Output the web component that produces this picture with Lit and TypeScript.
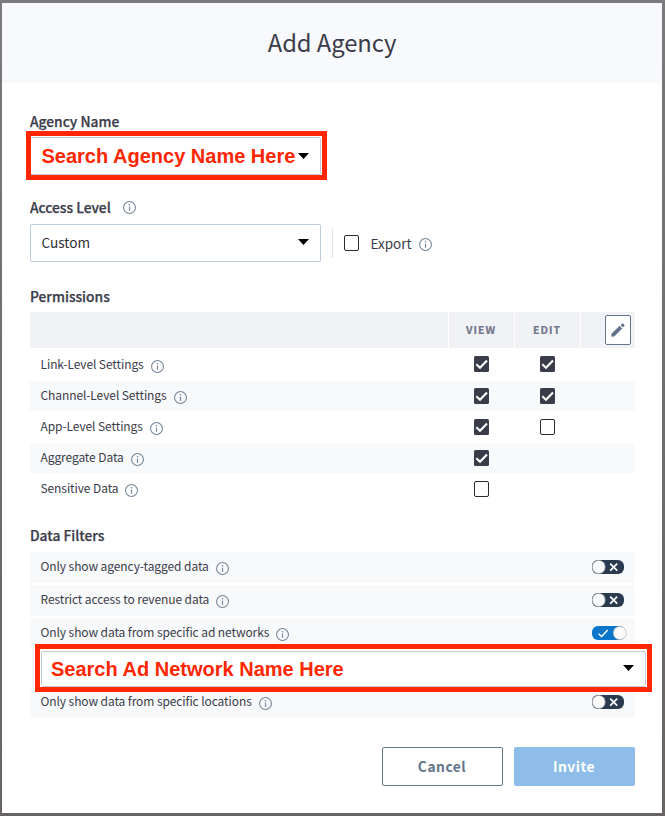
import { LitElement, html, css, svg, nothing } from "lit";
import { customElement, property } from "lit/decorators.js";

@customElement("info-icon")
class InfoIcon extends LitElement {
  static styles = css`
    :host { display: inline-flex; flex: none; width: 13px; height: 13px; }
    svg { display: block; }
  `;
  render() {
    return html`<svg width="13" height="13" viewBox="0 0 13 13" fill="none" stroke="#76869a">
      <circle cx="6.5" cy="6.5" r="5.95" stroke-width="1.1" />
      <path d="M6.5 5.6V9.8" stroke-width="1.2" />
      <circle cx="6.5" cy="3.8" r=".8" fill="#76869a" stroke="none" />
    </svg>`;
  }
}

@customElement("check-box")
class CheckBox extends LitElement {
  @property({ type: Boolean }) checked = false;
  static styles = css`
    :host { display: inline-flex; flex: none; width: 15px; height: 16px; }
    svg { display: block; }
  `;
  render() {
    return html`<svg width="15" height="16" viewBox="0 0 15 16" fill="none">
      ${this.checked
        ? svg`<rect width="15" height="16" rx="1.5" fill="#3b3c4a" />
            <path d="M2.3 8.2L6 11.8L13 4.5" stroke="#fff" stroke-width="2.1" />`
        : svg`<rect x=".5" y=".5" width="14" height="15" rx="1.5" fill="#fff" stroke="#2b2b2f" />`}
    </svg>`;
  }
}

@customElement("toggle-switch")
class ToggleSwitch extends LitElement {
  @property({ type: Boolean }) on = false;
  static styles = css`
    :host { display: inline-flex; flex: none; width: 35px; height: 14px; }
    svg { display: block; }
  `;
  render() {
    return html`<svg width="35" height="14" viewBox="0 0 35 14" fill="none">
      ${this.on
        ? svg`<rect width="33" height="14" rx="6" fill="#0b75c9" />
            <path d="M6.5 7.8L9.6 10.5L15.7 4" stroke="#fff" stroke-width="1.5" />
            <rect x="21.4" y=".4" width="12.7" height="13.2" rx="6.2" fill="#fafafa" stroke="#b5b5b5" stroke-width=".7" />`
        : svg`<rect width="32" height="14" rx="6" fill="#2a3b50" />
            <path d="M18.2 3.7L25.2 10.7M25.2 3.7L18.2 10.7" stroke="#fff" stroke-width="1.7" />
            <rect x=".4" y=".4" width="12.7" height="13.2" rx="6.2" fill="#fafafa" stroke="#a0a3a8" stroke-width=".7" />`}
    </svg>`;
  }
}

interface Permission { name: string; view?: boolean; edit?: boolean }
const PERMISSIONS: Permission[] = [
  { name: "Link-Level Settings", view: true, edit: true },
  { name: "Channel-Level Settings", view: true, edit: true },
  { name: "App-Level Settings", view: true, edit: false },
  { name: "Aggregate Data", view: true },
  { name: "Sensitive Data", view: false },
];

@customElement("app-root")
class AppRoot extends LitElement {
  static styles = css`
    * { box-sizing: border-box; }
    :host {
      box-sizing: border-box; display: block; width: 665px; height: 816px; padding: 3px 3px 3px 2px;
      background: linear-gradient(#7b7b7b, #6d6d6d 50%, #686464);
      font-family: "Noto Sans CJK SC", "Open Sans", sans-serif; color: #3b3c4a; overflow: hidden;
    }
    .modal { height: 810px; background: #fff; display: flex; flex-direction: column; }
    header {
      height: 80px; flex: none; background: #f8f9fd; display: flex; justify-content: center;
      font-size: 23.8px; line-height: 78px; letter-spacing: -.08px;
    }
    main { padding: 28px 27px 0 28px; display: flex; flex-direction: column; }
    .label {
      height: 20px; line-height: 20px; font-size: 13.8px; font-weight: 500; -webkit-text-stroke: .25px #3b3c4a;
      display: flex; align-items: center; gap: 12px; letter-spacing: -.02px;
    }
    .select {
      position: relative; flex: none; width: 291px; height: 38px; border: 1px solid #bfccd9; border-radius: 2px; background: #fff;
      display: flex; align-items: center; justify-content: space-between; padding: 0 11px 0 10.5px;
      font-size: 13.6px; line-height: 20px; color: #2e2e33;
    }
    .custom { margin-top: -3px; }
    .caret { display: block; flex: none; margin-top: -2px; }
    .marked::after { content: ""; position: absolute; inset: -7px -7px -6px -5px; border: 5px solid #ff2600; }
    .note { font-family: "Liberation Sans", Arial, sans-serif; font-weight: 700; font-size: 20px; color: #ff2600; white-space: nowrap; }
    .agency { margin-top: 6px; }
    .agency .caret { margin-top: 0; }
    .access { margin-top: 22px; }
    .access info-icon { margin-top: 1px; }
    .level { display: flex; align-items: center; margin-top: 7px; }
    .rule { width: 1px; height: 30px; background: #dfe5ec; margin: 0 11px; }
    .export { font-size: 13.5px; line-height: 20px; margin: -1px 7px 0 11.5px; }
    .level info-icon { margin-top: 2px; }
    .perms { margin-top: 24px; }
    .grid { display: grid; grid-template-columns: 418px 65px 65px 54px; column-gap: 1px; }
    .head { height: 36px; margin-top: 6px; }
    .head > div {
      background: #f1f2f6; display: flex; align-items: center; justify-content: center;
      font-weight: 700; font-size: 10.5px; letter-spacing: 1px; color: #71758c; padding: 0 1px 2px 0;
      -webkit-text-stroke: .2px #71758c;
    }
    .head .tools { justify-content: flex-end; padding: 0 4px 0 0; }
    .edit { width: 26px; height: 30px; border: 1px solid #63758a; border-radius: 2px; background: #fff; display: grid; place-items: center; }
    .body { display: flex; flex-direction: column; gap: 1px; padding-top: 2px; }
    .row { height: 30px; align-items: center; }
    .row:nth-child(even) { background: #f8f9fb; }
    .row:first-child .cell { margin-top: -2px; }
    .name {
      display: flex; align-items: center; gap: 7px; padding-left: 10.5px; margin-top: -2px;
      font-size: 12px; line-height: 20px; letter-spacing: -.09px; white-space: nowrap;
    }
    .name info-icon { margin-top: 4px; }
    .cell { display: flex; justify-content: center; }
    .filters { margin-top: 21px; }
    .list { display: flex; flex-direction: column; gap: 2px; margin-top: 7px; }
    .filter { height: 31px; background: #f8f9fb; display: flex; align-items: center; justify-content: space-between; padding-right: 8px; }
    .filter .name { margin-top: -3px; }
    .filter info-icon { margin-top: 5px; }
    .filter toggle-switch { margin-top: -1px; }
    .network { width: 605px; height: 36px; margin: 2px 0 0 11px; padding-left: 9px; }
    .network::after { inset: -8px -7px -6px -7px; }
    .network .caret { margin-top: -3px; }
    .group { display: flex; flex-direction: column; }
    .actions { display: flex; gap: 11px; justify-content: flex-end; margin-top: 29px; }
    .btn {
      width: 121px; height: 39px; border-radius: 2px; display: flex; align-items: center; justify-content: center;
      font-size: 13.8px; font-weight: 700; letter-spacing: .5px; padding: 0 1px 2px 0;
    }
    .cancel { border: 1px solid #63758a; color: #63758a; }
    .invite { background: #8dbde8; color: #fff; }
  `;

  caret() {
    return html`<svg class="caret" width="11" height="6" viewBox="0 0 11 6"><path d="M0 0H11L5.5 6Z" fill="#000" /></svg>`;
  }

  filter(text: string, on = false) {
    return html`<div class="filter">
      <div class="name"><span>${text}</span><info-icon></info-icon></div>
      <toggle-switch ?on=${on}></toggle-switch>
    </div>`;
  }

  render() {
    return html`<div class="modal">
      <header><span>Add Agency</span></header>
      <main>
        <div class="label"><span>Agency Name</span></div>
        <div class="agency select marked"><span class="note">Search Agency Name Here</span>${this.caret()}</div>
        <div class="label access"><span>Access Level</span><info-icon></info-icon></div>
        <div class="level">
          <div class="select"><span class="custom">Custom</span>${this.caret()}</div>
          <div class="rule"></div>
          <check-box></check-box>
          <span class="export">Export</span><info-icon></info-icon>
        </div>
        <div class="label perms"><span>Permissions</span></div>
        <div class="grid head">
          <div></div><div>VIEW</div><div>EDIT</div>
          <div class="tools"><span class="edit">
            <svg width="14" height="14" viewBox="0 0 14 14" fill="#5d7087" stroke="#5d7087" stroke-width=".8" stroke-linejoin="round">
              <path d="M.7 13.3L1.1 10.5L8.6 3.2L10.9 5.5L3.4 12.9Z" />
              <path d="M10 2.1L11.1 1Q11.6.6 12.1 1L13 1.9Q13.4 2.4 13 2.9L11.9 4Z" />
            </svg></span></div>
        </div>
        <div class="body">
          ${PERMISSIONS.map((p) => html`<div class="grid row">
            <div class="name"><span>${p.name}</span><info-icon></info-icon></div>
            <div class="cell">${p.view === undefined ? nothing : html`<check-box ?checked=${p.view}></check-box>`}</div>
            <div class="cell">${p.edit === undefined ? nothing : html`<check-box ?checked=${p.edit}></check-box>`}</div>
          </div>`)}
        </div>
        <div class="label filters"><span>Data Filters</span></div>
        <div class="list">
          ${this.filter("Only show agency-tagged data")}
          ${this.filter("Restrict access to revenue data")}
          <div class="group">
            ${this.filter("Only show data from specific ad networks", true)}
            <div class="select marked network"><span class="note">Search Ad Network Name Here</span>${this.caret()}</div>
            ${this.filter("Only show data from specific locations")}
          </div>
        </div>
        <div class="actions"><div class="btn cancel">Cancel</div><div class="btn invite">Invite</div></div>
      </main>
    </div>`;
  }
}
